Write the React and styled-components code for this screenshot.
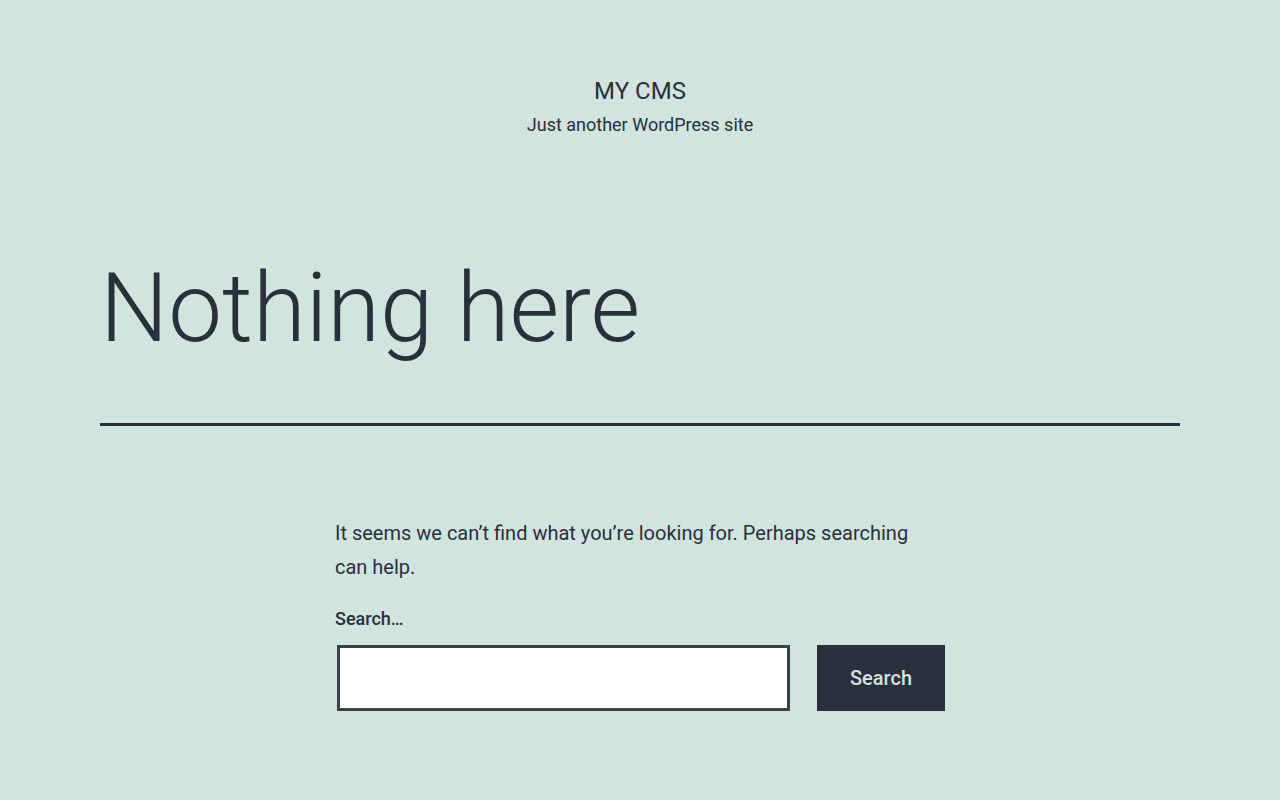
import React from 'react'
import styled, { createGlobalStyle } from 'styled-components'

const GlobalStyle = createGlobalStyle`
  html, body {
    margin: 0;
    padding: 0;
    background: #d1e4dd;
  }
  body {
    font-family: Roboto, "Liberation Sans", sans-serif;
    color: #28303d;
  }
  * {
    box-sizing: border-box;
  }
`

const Page = styled.div`
  min-height: 800px;
  background: #d1e4dd;
  padding: 0 100px;
`

const Header = styled.header`
  padding-top: 76px;
  text-align: center;
`

const SiteTitle = styled.h1`
  margin: 0;
  font-size: 24px;
  font-weight: 400;
  line-height: 31px;
  text-transform: uppercase;
`

const SiteDescription = styled.p`
  margin: 5px 0 0;
  font-size: 18px;
  line-height: 25px;
`

const PageHeader = styled.div`
  margin-top: 119px;
  padding-bottom: 61px;
  border-bottom: 3px solid #28303d;
`

const PageTitle = styled.h2`
  margin: 0;
  font-size: 96px;
  font-weight: 300;
  line-height: 1.1;
`

const Content = styled.div`
  width: 610px;
  margin: 90px auto 0;
`

const Intro = styled.p`
  margin: 0;
  font-size: 20px;
  line-height: 34px;
`

const SearchForm = styled.form`
  margin-top: 20px;
`

const Label = styled.label`
  display: block;
  font-size: 18px;
  font-weight: 500;
  line-height: 30px;
`

const Row = styled.div`
  display: flex;
  gap: 27px;
  margin-top: 11px;
`

const Input = styled.input`
  flex: 1;
  margin-left: 2px;
  height: 66px;
  border: 3px solid #39414d;
  background: #fff;
  padding: 10px;
  font-size: 18px;
  font-family: inherit;
  color: #28303d;
  outline: none;
  border-radius: 0;
`

const Button = styled.button`
  width: 128px;
  height: 66px;
  border: none;
  background: #28303d;
  color: #d1e4dd;
  font-family: inherit;
  font-size: 20px;
  font-weight: 500;
  cursor: pointer;
`

const App = () => {
  return (
    <Page>
      <GlobalStyle />
      <Header>
        <SiteTitle>My CMS</SiteTitle>
        <SiteDescription>Just another WordPress site</SiteDescription>
      </Header>
      <PageHeader>
        <PageTitle>Nothing here</PageTitle>
      </PageHeader>
      <Content>
        <Intro>It seems we can’t find what you’re looking for. Perhaps searching can help.</Intro>
        <SearchForm onSubmit={e => e.preventDefault()}>
          <Label htmlFor="search">Search…</Label>
          <Row>
            <Input id="search" type="search" />
            <Button type="submit">Search</Button>
          </Row>
        </SearchForm>
      </Content>
    </Page>
  )
}

export default App
